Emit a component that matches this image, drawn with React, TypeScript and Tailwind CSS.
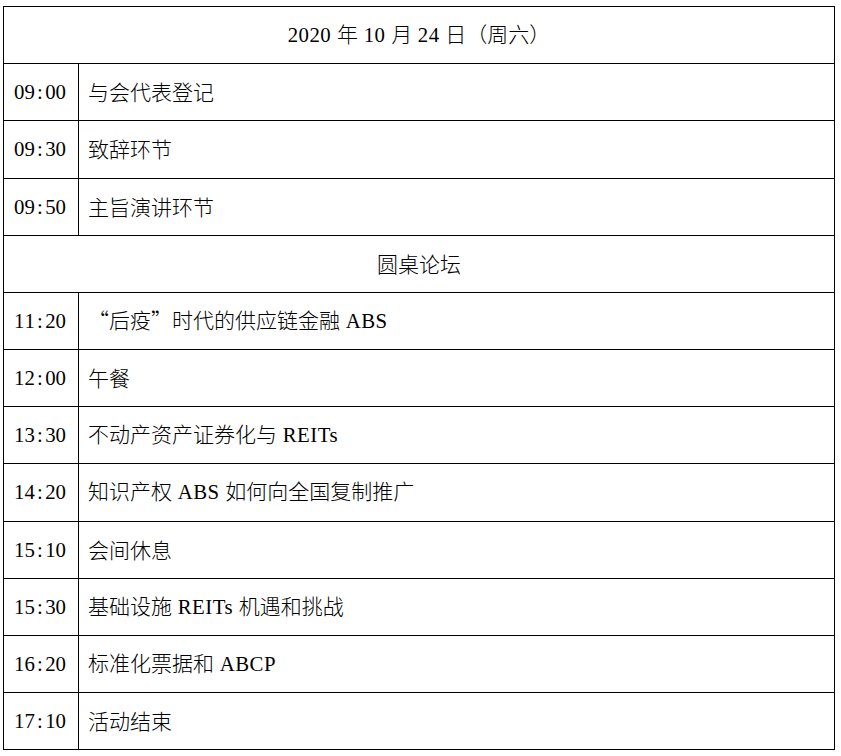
import { Fragment } from 'react'

type Row =
  | { kind: 'title'; text: string; h: string }
  | { kind: 'item'; time: string; text: string; h: string }

const ROWS: Row[] = [
  { kind: 'item', time: '09:00', text: '与会代表登记', h: 'h-[57px]' },
  { kind: 'item', time: '09:30', text: '致辞环节', h: 'h-[58px]' },
  { kind: 'item', time: '09:50', text: '主旨演讲环节', h: 'h-[57px]' },
  { kind: 'title', text: '圆桌论坛', h: 'h-[57px]' },
  { kind: 'item', time: '11:20', text: '“后疫”时代的供应链金融 ABS', h: 'h-[57px]' },
  { kind: 'item', time: '12:00', text: '午餐', h: 'h-[57px]' },
  { kind: 'item', time: '13:30', text: '不动产资产证券化与 REITs', h: 'h-[57px]' },
  { kind: 'item', time: '14:20', text: '知识产权 ABS 如何向全国复制推广', h: 'h-[58px]' },
  { kind: 'item', time: '15:10', text: '会间休息', h: 'h-[57px]' },
  { kind: 'item', time: '15:30', text: '基础设施 REITs 机遇和挑战', h: 'h-[57px]' },
  { kind: 'item', time: '16:20', text: '标准化票据和 ABCP', h: 'h-[57px]' },
  { kind: 'item', time: '17:10', text: '活动结束', h: 'h-[57px]' },
]

// ASCII runs use a serif Latin face, the rest the CJK face.
function Mixed({ text }: { text: string }) {
  const parts = text.match(/[\x00-\x7f]+|[^\x00-\x7f]+/g) ?? []
  return (
    <span className="whitespace-pre">
      {parts.map((p, i) => (
        <Fragment key={i}>
          {/^[\x00-\x7f]+$/.test(p) ? (
            <span className="font-['Liberation_Serif',serif] text-[20.8px] tracking-[0.5px]">{p}</span>
          ) : (
            <span className="font-['Noto_Sans_CJK_SC',sans-serif] text-[21px] font-light">{p}</span>
          )}
        </Fragment>
      ))}
    </span>
  )
}

// times are set on a half-width grid, colon included
function Time({ value }: { value: string }) {
  return (
    <span className="font-['Liberation_Serif',serif] text-[20.8px]">
      {value.split('').map((c, i) => (
        <span key={i} className="inline-block w-[10.4px] text-center">
          {c}
        </span>
      ))}
    </span>
  )
}

export default function App() {
  return (
    <div className="min-h-[756px] bg-white pt-[6px] pl-[3px] text-black">
      <div className="w-[832px] border border-black">
        {/* Header */}
        <div className="flex h-[56px] items-center justify-center pb-[2px] leading-none">
          <Mixed text="2020 年 10 月 24 日（周六）" />
        </div>

        {ROWS.map((r, i) =>
          r.kind === 'title' ? (
            <div key={i} className={`flex ${r.h} items-center justify-center border-t border-black pb-[2px] leading-none`}>
              <Mixed text={r.text} />
            </div>
          ) : (
            <div key={i} className={`flex ${r.h} border-t border-black leading-none`}>
              <div className="flex w-[75px] shrink-0 items-center border-r border-black pl-[10px]">
                <Time value={r.time} />
              </div>
              <div className="flex flex-1 items-center pb-[2px] pl-[9px]">
                <Mixed text={r.text} />
              </div>
            </div>
          ),
        )}
      </div>
    </div>
  )
}
